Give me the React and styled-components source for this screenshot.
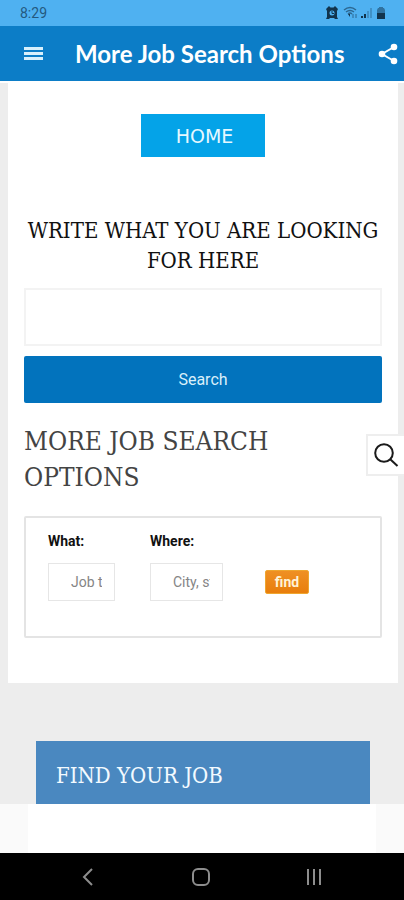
import React, { useState } from "react";
import styled, { createGlobalStyle } from "styled-components";

const App = () => {
  const [query, setQuery] = useState("");
  const [what, setWhat] = useState("");
  const [where, setWhere] = useState("");

  const handleSubmit = (e) => {
    e.preventDefault();
  };

  return (
    <Wrapper>
      <GlobalStyle />
      <StatusBar>
        <span>8:29</span>
        <StatusIcons />
      </StatusBar>
      <Header>
        <IconButton aria-label="Menu">
          <svg width="20" height="16" viewBox="0 0 20 16" fill="#d8f0fc">
            <path d="M0 1h19v3H0zM0 6h19v3H0zM0 11h19v3H0z" />
          </svg>
        </IconButton>
        <Title>More Job Search Options</Title>
        <IconButton aria-label="Share">
          <svg width="20" height="22" viewBox="0 0 20 22" fill="#fff">
            <path d="M16 4 4 11l12 7" fill="none" stroke="#fff" strokeWidth="2" />
            <circle cx="16" cy="4" r="3.3" />
            <circle cx="4" cy="11" r="3.3" />
            <circle cx="16" cy="18" r="3.3" />
          </svg>
        </IconButton>
      </Header>
      <Main>
        <Card>
          <HomeLink href="#home">HOME</HomeLink>
          <form onSubmit={handleSubmit}>
            <SearchLabel htmlFor="query">
              WRITE WHAT YOU ARE LOOKING FOR HERE
            </SearchLabel>
            <SearchInput
              id="query"
              type="text"
              value={query}
              onChange={(e) => setQuery(e.target.value)}
            />
            <SearchButton type="submit">Search</SearchButton>
          </form>
          <Heading>MORE JOB SEARCH OPTIONS</Heading>
          <JobForm onSubmit={handleSubmit}>
            <Field>
              <label htmlFor="what">What:</label>
              <FieldInput
                id="what"
                $width={67}
                placeholder="Job title"
                value={what}
                onChange={(e) => setWhat(e.target.value)}
              />
            </Field>
            <Field>
              <label htmlFor="where">Where:</label>
              <FieldInput
                id="where"
                $width={73}
                placeholder="City, state"
                value={where}
                onChange={(e) => setWhere(e.target.value)}
              />
            </Field>
            <FindButton type="submit">find</FindButton>
          </JobForm>
        </Card>
        <Banner>FIND YOUR JOB</Banner>
      </Main>
      <BottomStrip>
        <BottomPanel />
      </BottomStrip>
      <NavBar>
        <NavButton aria-label="Back">
          <svg width="20" height="20" viewBox="0 0 20 20">
            <path d="m14 2-8 8 8 8" />
          </svg>
        </NavButton>
        <NavButton aria-label="Home">
          <svg width="20" height="20" viewBox="0 0 20 20">
            <rect x="2" y="2" width="16" height="16" rx="5" />
          </svg>
        </NavButton>
        <NavButton aria-label="Recent apps">
          <svg width="20" height="20" viewBox="0 0 20 20">
            <path d="M4 2v16M10 2v16M16 2v16" />
          </svg>
        </NavButton>
      </NavBar>
      <FloatingSearch aria-label="Open search">
        <svg width="26" height="26" viewBox="0 0 26 26">
          <circle cx="11" cy="11" r="8.8" />
          <path d="m17.5 17.5 7 6.5" />
        </svg>
      </FloatingSearch>
    </Wrapper>
  );
};

const StatusIcons = () => (
  <svg width="60" height="14" viewBox="0 0 60 14" fill="#12344d">
    <path d="m0 3 3-3 1.5 1.5h3L9 0l3 3-1 2v6l1 2H9l-1-1H4l-1 1H0l1-2V5z" />
    <circle cx="6" cy="7" r="2.5" fill="#4eb0f0" />
    <path d="M6 5v2.5h2" fill="none" stroke="#12344d" />
    <g fill="none" stroke="#2c6791" strokeWidth="1.5">
      <path d="M18 4q6-5 12 0M20 6q4-3 8 0M22 8q2-2 4 0" />
      <path d="M27 8v4M30 8v4" strokeWidth="1" />
    </g>
    <path d="M24 8v3l-2-3zM35 10h2v2h-2zM38 8h2v4h-2z" />
    <path d="M41 5h2v7h-2zM44 2h2v10h-2z" opacity="0.25" />
    <path d="M53 1h4v1h1l1 2v9h-8V4l1-2h1z" opacity="0.5" />
    <path d="M51 7h8v6h-8z" />
  </svg>
);

const slab = `"DejaVu Serif Condensed", "DejaVu Serif", serif`;

const GlobalStyle = createGlobalStyle`
  * {
    box-sizing: border-box;
  }

  body {
    margin: 0;
    font-family: Roboto, sans-serif;
    color: #111;
  }

  button {
    font-family: inherit;
    border: 0;
    padding: 0;
    cursor: pointer;
  }
`;

const Wrapper = styled.div`
  display: flex;
  flex-direction: column;
  min-height: 100vh;
  background-color: #ededed;
  position: relative;
`;

const StatusBar = styled.div`
  display: flex;
  align-items: center;
  justify-content: space-between;
  height: 26px;
  padding: 0 18px 0 20px;
  background-color: #4fb1f1;
  color: #24597f;
  font-size: 14px;
`;

const Header = styled.header`
  display: flex;
  align-items: center;
  height: 55px;
  padding: 0 6px 0 24px;
  background-color: #0c7dc7;
`;

const IconButton = styled.button`
  display: flex;
  background: none;
`;

const Title = styled.h1`
  flex: 1;
  margin: 0;
  padding-left: 31px;
  color: #fff;
  font-family: Lato, sans-serif;
  font-size: 24px;
  font-weight: 700;
  white-space: nowrap;
`;

const Main = styled.main`
  flex: 1 0 auto;
  display: flex;
  flex-direction: column;
  border-top: 2px solid #fff;
`;

const Card = styled.section`
  display: flex;
  flex-direction: column;
  margin: 0 6px 0 8px;
  padding: 31px 16px 45px;
  background-color: #fff;
`;

const HomeLink = styled.a`
  align-self: center;
  width: 124px;
  margin-bottom: 59px;
  padding: 2px 0 0 3px;
  background-color: #04a3e8;
  color: #e6f8ff;
  font-family: "DejaVu Sans", sans-serif;
  font-size: 19px;
  line-height: 41px;
  text-align: center;
  text-decoration: none;
`;

const SearchLabel = styled.label`
  display: block;
  margin-bottom: 12px;
  font-family: ${slab};
  font-size: 22px;
  line-height: 30px;
  text-align: center;
`;

const SearchInput = styled.input`
  display: block;
  width: 100%;
  height: 58px;
  margin-bottom: 10px;
  padding: 0 16px;
  border: 2px solid #f3f3f3;
  outline: none;
  font-size: 16px;
`;

const SearchButton = styled.button`
  display: block;
  width: 100%;
  height: 47px;
  border-radius: 2px;
  background-color: #0273bd;
  color: #d9effa;
  font-size: 16px;
`;

const Heading = styled.h2`
  margin: 20px 0 21px;
  color: #444;
  font-family: ${slab};
  font-size: 26px;
  font-weight: 400;
  line-height: 36px;
`;

const JobForm = styled.form`
  display: flex;
  align-items: flex-start;
  height: 122px;
  padding: 14px 22px;
  border: 2px solid #e4e4e4;
  border-radius: 2px;
`;

const Field = styled.div`
  display: flex;
  flex-direction: column;
  gap: 13px;
  margin-right: 35px;
  font-size: 14px;
  font-weight: 700;
  line-height: 18px;
`;

const FieldInput = styled.input`
  width: ${(props) => props.$width}px;
  height: 38px;
  padding: 0 12px 0 22px;
  border: 1px solid #e6e6e6;
  outline: none;
  font-family: Roboto, sans-serif;
  font-size: 14px;

  &::placeholder {
    color: #858585;
  }
`;

const FindButton = styled.button`
  width: 44px;
  height: 24px;
  margin: 38px 0 0 7px;
  border: 1px solid #efa62f;
  border-radius: 2px;
  background: linear-gradient(#ef9023, #e87e0c);
  color: #fff3d6;
  font-size: 14px;
  font-weight: 700;
`;

const Banner = styled.h2`
  margin: 58px 34px 0 36px;
  padding: 22px 20px 16px;
  background-color: #4a88c0;
  color: #f3faff;
  font-family: ${slab};
  font-size: 22px;
  font-weight: 400;
  line-height: 25px;
`;

const BottomStrip = styled.div`
  display: flex;
  height: 49px;
  padding: 0 28px;
  background-color: #fafafa;
`;

const BottomPanel = styled.div`
  flex: 1;
  background-color: #fff;
`;

const NavBar = styled.nav`
  display: flex;
  align-items: center;
  justify-content: space-around;
  height: 47px;
  padding: 0 33px 0 31px;
  background-color: #000;
`;

const NavButton = styled.button`
  display: flex;
  background: none;

  svg {
    fill: none;
    stroke: #8d8d8d;
    stroke-width: 2;
  }
`;

const FloatingSearch = styled.button`
  position: absolute;
  top: 434px;
  right: 0;
  display: flex;
  align-items: center;
  justify-content: center;
  width: 38px;
  height: 42px;
  border: 2px solid #eee;
  border-right: 0;
  background-color: #fff;

  svg {
    fill: none;
    stroke: #1a1a1a;
    stroke-width: 2;
  }
`;

export default App;
